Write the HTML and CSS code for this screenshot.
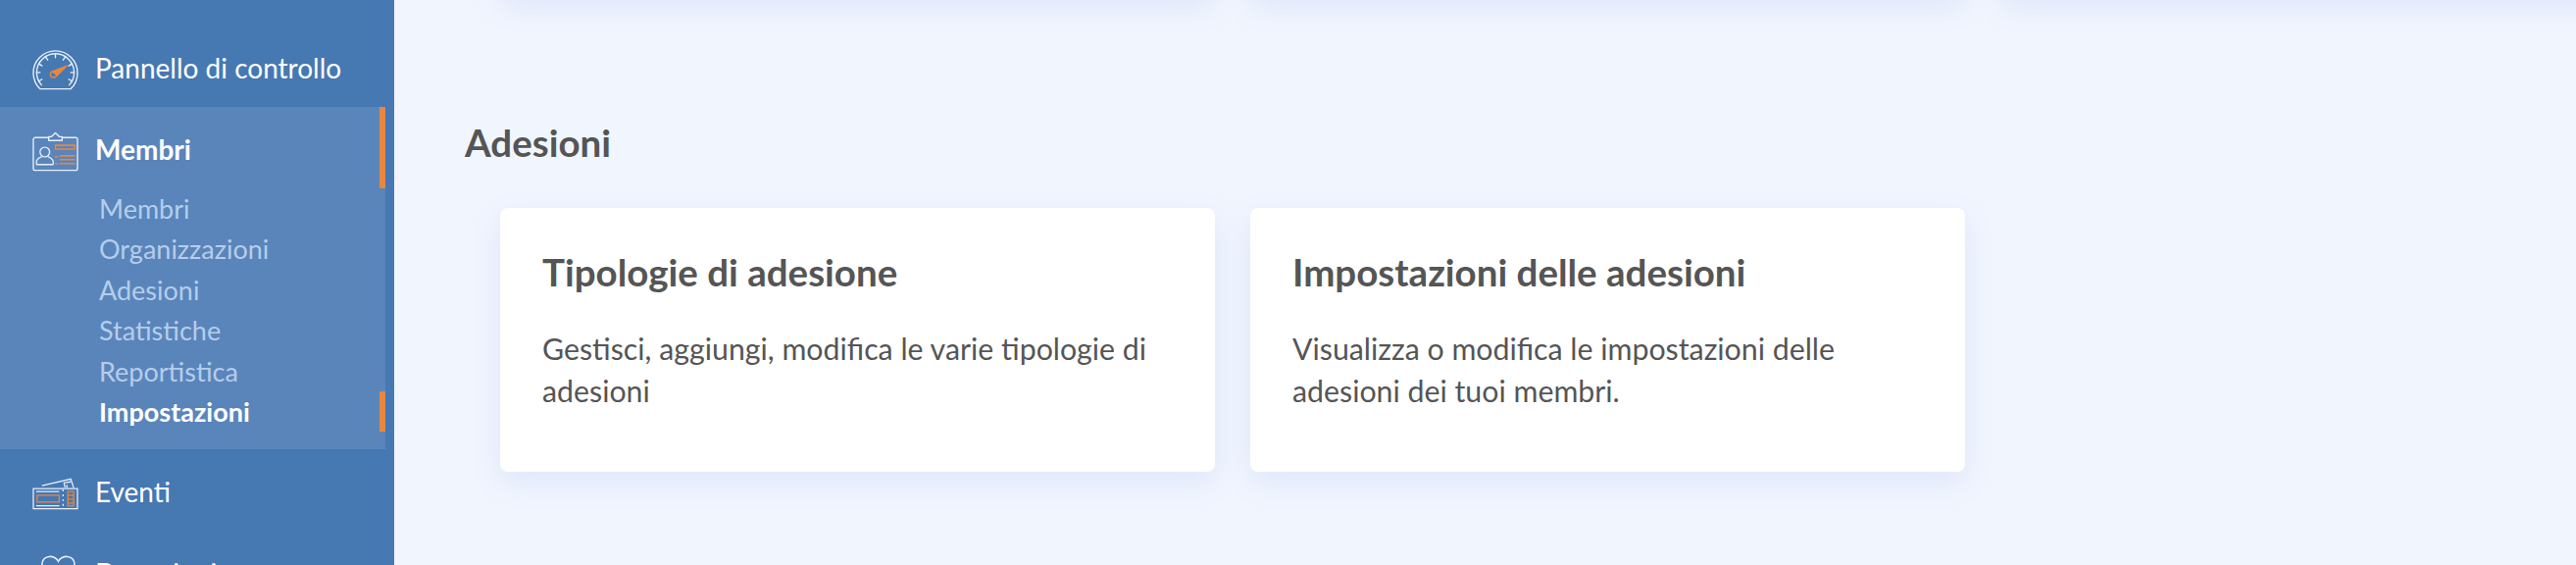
FILE: index.html
```html
<!DOCTYPE html>
<html>
<head>
	<title>Adesioni</title>
	<link rel="stylesheet" href="styles.css">
</head>
<body>
	<div class="container">
		<div class="sidebar">
			<a class="nav-item">
				<svg class="nav-icon" viewBox="0 0 48 42" fill="none" stroke="#e6eefa" stroke-width="1.4" stroke-linecap="round">
					<path d="M8 41 A23 23 0 1 1 40 41 Z"/>
					<path d="M9.5 37 A19.500 19.500 0 1 1 38.500 37"/>
					<path d="M24 5v3.500M14 8l2 3M34 8l-2 3M7 15l3 2M41 15l-3 2M4.500 24h3.500M43.500 24h-3.500M7 33l3-2M41 33l-3-2"/>
					<path d="M21 23 L36 17 L26 27 Z" stroke="#e8873f" fill="#e8873f" stroke-linejoin="round"/>
					<circle cx="22" cy="26" r="3.200" stroke="#e8873f"/>
				</svg>
				<span class="nav-label">Pannello di controllo</span>
			</a>
			<div class="nav-group">
				<a class="nav-item nav-item-active">
					<svg class="nav-icon" viewBox="0 0 48 42" fill="none" stroke="#e6eefa" stroke-width="1.4" stroke-linecap="round" stroke-linejoin="round">
						<path d="M17 7H3a2 2 0 0 0-2 2v30a2 2 0 0 0 2 2h42a2 2 0 0 0 2-2V9a2 2 0 0 0-2-2H31"/>
						<path d="M17 10h14V6h-3l-4-4-4 4h-3z"/>
						<circle cx="13" cy="22" r="5"/>
						<path d="M9.500 27c-5 1.500-6 5-5 8h17c1-3 0-6.500-5-8"/>
						<g stroke="#e8873f" stroke-width="1.600">
							<rect x="24" y="15" width="20" height="4"/>
							<path d="M24 27h2M24 34h2M29 26h15M29 30h15M29 34h15"/>
						</g>
					</svg>
					<span class="nav-label">Membri</span>
				</a>
				<a class="sub-item">Membri</a>
				<a class="sub-item">Organizzazioni</a>
				<a class="sub-item">Adesioni</a>
				<a class="sub-item">Statistiche</a>
				<a class="sub-item">Reportistica</a>
				<a class="sub-item sub-item-active">Impostazioni</a>
			</div>
			<a class="nav-item">
				<svg class="nav-icon" viewBox="0 0 48 34" fill="none" stroke="#e6eefa" stroke-width="1.300">
					<path d="M1 12h46v21H1z"/>
					<path d="M10 9 L40 2 L43 11M34 11 L33 6 L40 5 M36 11 V8"/>
					<path d="M32 13v2M32 18v2M32 23v2M32 28v2"/>
					<path d="M4 15h24M4 30h24"/>
					<g stroke="#e8873f">
						<rect x="5" y="19" width="23" height="7"/>
						<rect x="37" y="15" width="6" height="15"/>
						<path d="M37 19h6M37 23h6M37 27h6"/>
					</g>
				</svg>
				<span class="nav-label">Eventi</span>
			</a>
			<a class="nav-item">
				<svg class="nav-icon" viewBox="0 0 48 42" fill="none" stroke="#e6eefa" stroke-width="1.600">
					<path d="M27 7C24 0 10-.5 10 11C10 22 22 32 27 40C32 32 44 22 44 11C44-.5 30 0 27 7z"/>
				</svg>
				<span class="nav-label">Donazioni</span>
			</a>
		</div>
		<div class="main">
			<div class="card-row card-row-top">
				<div class="card"></div>
				<div class="card"></div>
				<div class="card"></div>
			</div>
			<h2 class="section-title">Adesioni</h2>
			<div class="card-row">
				<div class="card">
					<h3 class="card-title">Tipologie di adesione</h3>
					<p class="card-text">Gestisci, aggiungi, modifica le varie tipologie di adesioni</p>
				</div>
				<div class="card">
					<h3 class="card-title">Impostazioni delle adesioni</h3>
					<p class="card-text">Visualizza o modifica le impostazioni delle adesioni dei tuoi membri.</p>
				</div>
			</div>
		</div>
	</div>
</body>
</html>
```

FILE: styles.css
```css
html, body {
	height: 100%;
}

body {
	margin: 0;
	background: #f1f5fe;
	font-family: Lato, "Noto Sans", sans-serif;
	color: #555;
	overflow: hidden;
}

.container {
	display: flex;
	height: 100%;
	overflow: hidden;
}

.sidebar {
	flex: none;
	width: 402px;
	padding-top: 26px;
	background: #4678b2;
	color: #fff;
	box-sizing: border-box;
}

.nav-item {
	display: flex;
	align-items: center;
	gap: 17px;
	height: 83px;
	padding: 6px 0 0 33px;
	font-size: 28px;
	box-sizing: border-box;
}

.nav-label {
	margin-top: -3px;
}

.nav-icon {
	flex: none;
	width: 47px;
	height: 42px;
}

.nav-group {
	width: 393px;
	height: 349px;
	background: #5a85bb;
}

.nav-item-active {
	font-weight: 700;
	border-right: 6px solid #e8873f;
}

.sub-item {
	display: block;
	height: 41.400px;
	line-height: 41.400px;
	padding-left: 101px;
	font-size: 27px;
	color: #b5cdeb;
	box-sizing: border-box;
}

.sub-item-active {
	font-weight: 700;
	color: #fff;
	border-right: 6px solid #e8873f;
}

.main {
	flex: 1;
	min-width: 0;
	padding-left: 72px;
}

.card-row {
	display: flex;
	gap: 36px;
	padding-left: 36px;
}

.card-row-top {
	margin-top: -272px;
	height: 269px;
}

.card {
	flex: none;
	width: 729px;
	height: 269px;
	padding: 42px 43px 0;
	box-sizing: border-box;
	background: #fff;
	border-radius: 8px;
	box-shadow: 0 10px 30px rgba(90, 120, 220, 0.12);
}

.section-title {
	margin: 125px 0 0;
	height: 90px;
	font-size: 38.500px;
	font-weight: 700;
	line-height: 46px;
}

.card-title {
	margin: 0;
	font-size: 38.500px;
	font-weight: 700;
	line-height: 46px;
}

.card-text {
	margin: 34px 0 0;
	font-size: 30.300px;
	line-height: 43px;
}
```
